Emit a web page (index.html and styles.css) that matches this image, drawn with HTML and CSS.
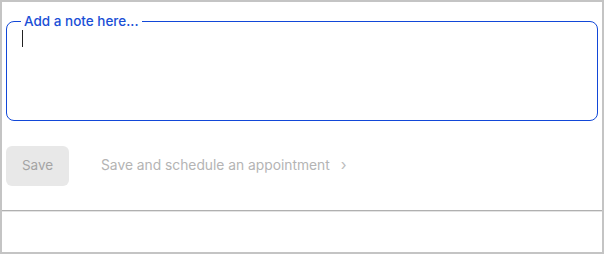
FILE: index.html
```html
<!DOCTYPE html>
<html>
<head>
<meta charset="utf-8">
<link rel="stylesheet" href="styles.css">
</head>
<body>
<div class="frame">
  <div class="content">
    <fieldset class="note">
      <legend class="note-label">Add a note here...</legend>
      <div class="note-input"><span class="caret"></span></div>
    </fieldset>
    <div class="actions">
      <button class="btn-save">Save</button>
      <a class="link-schedule">Save and schedule an appointment <span class="chev">&#8250;</span></a>
    </div>
  </div>
  <div class="divider"></div>
  <div class="footer"></div>
</div>
</body>
</html>
```

FILE: styles.css
```css
* { box-sizing: border-box; }
html, body { margin: 0; padding: 0; background: #fff; }
body { font-family: "Inter", "Liberation Sans", sans-serif; }
.frame {
  width: 604px;
  height: 254px;
  border: 2px solid #c4c4c4;
  display: flex;
  flex-direction: column;
  background: #fff;
}
.content { padding: 0 4px; height: 208px; }
.note {
  margin: 11px 0 0 0;
  height: 108px;
  border: 1px solid #1248d8;
  border-radius: 8px;
  padding: 0 15px;
}
.note-label {
  color: #1a4fd6;
  font-size: 13.5px;
  font-weight: 500;
  padding: 0 3px;
  margin-left: -1px;
  line-height: 16px;
}
.note-input { padding-top: 1px; height: 60px; }
.caret {
  display: block;
  width: 1px;
  height: 17px;
  background: #222;
}
.actions {
  display: flex;
  align-items: center;
  gap: 32px;
  margin-top: 25px;
}
.btn-save {
  width: 63px;
  height: 40px;
  border: none;
  border-radius: 6px;
  background: #e8e8e8;
  color: #a4a4a4;
  font-family: inherit;
  font-size: 13.5px;
  padding: 0 0 2px 0;
}
.link-schedule {
  color: #b4b4b4;
  font-size: 13.8px;
  display: flex;
  align-items: center;
  gap: 11px;
  padding-bottom: 2px;
}
.chev { font-size: 15px; line-height: 1; padding-bottom: 1px; color: #bcbcbc; }
.divider {
  height: 1px;
  background: #b0b0b0;
  box-shadow: 0 1px 0 #e4e4e4;
}
.footer { flex: 1; }
```
